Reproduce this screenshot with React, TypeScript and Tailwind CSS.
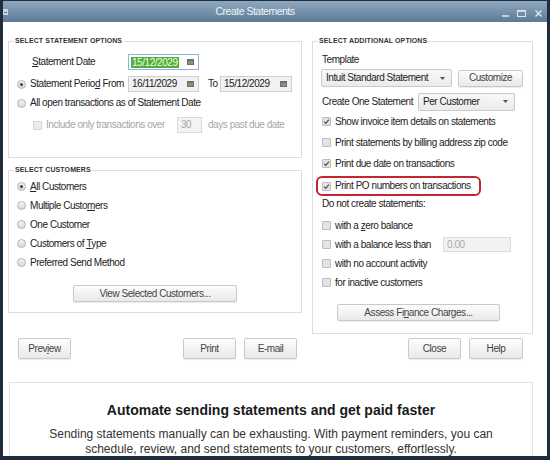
import type { ReactNode } from "react";

// Small building blocks for the statements dialog

function Radio({ checked = false }: { checked?: boolean }) {
    return (
        <span className="w-[9px] h-[9px] rounded-full border border-[#b3b3b3] bg-linear-to-b from-[#f3f3f3] to-[#d9d9d9] flex items-center justify-center shrink-0">
            {checked && <span className="w-[3px] h-[3px] rounded-full bg-[#3f3f3f]" />}
        </span>
    );
}

function Check({ checked = false, disabled = false }: { checked?: boolean; disabled?: boolean }) {
    return (
        <span
            className={`w-[9px] h-[9px] rounded-[1px] border flex items-center justify-center shrink-0 ${
                disabled ? "border-[#d2d2d2] bg-[#ececec]" : "border-[#bdbdbd] bg-[#e4e4e4]"
            }`}
        >
            {checked && (
                <svg width="7" height="7" viewBox="0 0 7 7">
                    <path d="M1.2 3.8 L2.8 5.3 L5.9 1.6" stroke="#505050" strokeWidth="1.2" fill="none" />
                </svg>
            )}
        </span>
    );
}

function CalendarIcon() {
    return (
        <svg width="7" height="6" viewBox="0 0 7 6" className="shrink-0">
            <rect width="7" height="6" fill="#6f6f6f" />
            <rect x="1" y="2" width="5" height="3" fill="#8c8c8c" />
        </svg>
    );
}

function DateInput({ value, width, focused = false }: { value: string; width: string; focused?: boolean }) {
    return (
        <div
            className={`${width} h-[16px] border flex items-center justify-between pl-[2px] pr-[4px] shrink-0 ${
                focused ? "border-[#8db3de] bg-white" : "border-[#cfcfcf] bg-[#f1f1f1]"
            }`}
        >
            {focused ? (
                <span className="bg-[#54ad3c] text-[#eaffdc] leading-[11px] px-[1px]">{value}</span>
            ) : (
                <span className="pl-[1px]">{value}</span>
            )}
            <CalendarIcon />
        </div>
    );
}

function Select({ value, width }: { value: string; width: string }) {
    return (
        <div
            className={`${width} h-[18px] border border-[#cacaca] rounded-[2px] bg-linear-to-b from-[#f8f8f8] to-[#ebebeb] flex items-center justify-between pl-[4px] pr-[6px] shrink-0`}
        >
            <span>{value}</span>
            <svg width="5" height="3" viewBox="0 0 5 3">
                <path d="M0 0 H5 L2.5 3 Z" fill="#555" />
            </svg>
        </div>
    );
}

function Button({ children, className = "" }: { children: ReactNode; className?: string }) {
    return (
        <div
            className={`h-[17px] border border-[#c9c9c9] rounded-[2px] bg-linear-to-b from-[#fdfdfd] to-[#e9e9e9] shadow-[0_1px_1px_rgba(0,0,0,0.08)] flex items-center justify-center text-[#444] shrink-0 ${className}`}
        >
            {children}
        </div>
    );
}

function Group({ title, className, children }: { title: string; className: string; children: ReactNode }) {
    return (
        <fieldset className={`border border-[#dedede] ${className}`}>
            <legend className="ml-[5px] px-[1px] text-[7px] leading-[8px] font-bold tracking-[0.1px] text-[#333]">
                {title}
            </legend>
            {children}
        </fieldset>
    );
}

function TitleBar() {
    return (
        <div className="h-[21px] flex items-center bg-linear-to-b from-[#8fa8bf] to-[#5d7a96] shrink-0">
            <div className="w-[10px] h-full flex items-center">
                <svg width="5" height="6" viewBox="0 0 5 6">
                    <rect width="5" height="6" fill="#c9d4df" />
                    <rect x="1" y="3" width="3" height="1" fill="#5d6f82" />
                </svg>
            </div>
            <div className="flex-1 text-center text-[10.5px] tracking-[-0.5px] text-[#eef3f8]">Create Statements</div>
            <svg width="50" height="21" viewBox="0 0 50 21" className="shrink-0">
                {/* minimise, maximise, close */}
                <path d="M5 15 H12" stroke="#dbe3ec" strokeWidth="1.6" />
                <rect x="20.5" y="9.5" width="8" height="6" stroke="#dbe3ec" strokeWidth="1.1" fill="none" />
                <path d="M20.5 10 H28.5" stroke="#dbe3ec" strokeWidth="1.6" />
                <path d="M38.5 9.5 L44.5 15.5 M44.5 9.5 L38.5 15.5" stroke="#dbe3ec" strokeWidth="1.5" />
            </svg>
        </div>
    );
}

export default function App() {
    return (
        <div className="w-[550px] h-[460px] bg-[#1e2c3b] px-[3px] pt-[1px] pb-[4px] flex flex-col overflow-hidden font-['Liberation_Sans',Arial,sans-serif] text-[10px] leading-none tracking-[-0.45px] text-[#232323]">
            <TitleBar />

            <div className="flex-1 bg-white pl-[5px] pr-[14px] overflow-hidden">
                <div className="flex gap-[10px] pt-[15px]">
                    {/* Left column */}
                    <div className="w-[294px] flex flex-col gap-[8px]">
                        <Group title="SELECT STATEMENT OPTIONS" className="h-[121px]">
                            <div className="mt-[9px] h-[16px] flex items-center">
                                <span className="ml-[23px] w-[96px]">
                                    <u>S</u>tatement Date
                                </span>
                                <DateInput value="15/12/2029" width="w-[71px]" focused />
                            </div>
                            <div className="mt-[6px] h-[16px] flex items-center">
                                <span className="ml-[8px]">
                                    <Radio checked />
                                </span>
                                <span className="ml-[4px] w-[98px]">
                                    Statement Perio<u>d</u> From
                                </span>
                                <DateInput value="16/11/2029" width="w-[71px]" />
                                <span className="ml-[9px] w-[12px]">To</span>
                                <DateInput value="15/12/2029" width="w-[72px]" />
                            </div>
                            <div className="mt-[3px] h-[16px] flex items-center">
                                <span className="ml-[8px]">
                                    <Radio />
                                </span>
                                <span className="ml-[4px]">All open transactions as of Statement Date</span>
                            </div>
                            <div className="mt-[6px] h-[16px] flex items-center text-[#a6a6a6]">
                                <span className="ml-[24px]">
                                    <Check disabled />
                                </span>
                                <span className="ml-[4px] w-[131px]">Include only transactions over</span>
                                <div className="w-[25px] h-[16px] border border-[#dadada] bg-[#f3f3f3] flex items-center pl-[3px]">
                                    30
                                </div>
                                <span className="ml-[6px]">days past due date</span>
                            </div>
                        </Group>

                        <Group title="SELECT CUSTOMERS" className="h-[147px]">
                            <div className="mt-[3px]">
                                {[
                                    [<><u>A</u>ll Customers</>, true],
                                    [<>Multiple Custo<u>m</u>ers</>, false],
                                    [<>One Customer</>, false],
                                    [<>Customers of <u>T</u>ype</>, false],
                                    [<>Preferred Send Method</>, false],
                                ].map(([label, checked], i) => (
                                    <div key={i} className="h-[19px] flex items-center pl-[8px]">
                                        <Radio checked={checked as boolean} />
                                        <span className="ml-[4px]">{label as ReactNode}</span>
                                    </div>
                                ))}
                            </div>
                            <Button className="mt-[13px] mx-auto w-[164px]">View Selected Customers...</Button>
                        </Group>
                    </div>

                    {/* Right column */}
                    <Group title="SELECT ADDITIONAL OPTIONS" className="w-[221px] h-[297px]">
                        <div className="mt-[8px] h-[14px] pl-[9px] flex items-center">Template</div>
                        <div className="mt-[2px] h-[18px] pl-[8px] flex items-center">
                            <Select value="Intuit Standard Statement" width="w-[131px]" />
                            <Button className="ml-[6px] w-[65px]">Customize</Button>
                        </div>
                        <div className="mt-[6px] h-[17px] pl-[9px] flex items-center">
                            <span className="w-[96px]">Create One Statement</span>
                            <Select value="Per Customer" width="w-[97px]" />
                        </div>

                        <div className="mt-[1px]">
                            {[
                                ["Show invoice item details on statements", true],
                                ["Print statements by billing address zip code", false],
                                ["Print due date on transactions", true],
                            ].map(([label, checked]) => (
                                <div key={label as string} className="h-[21px] pl-[9px] flex items-center">
                                    <Check checked={checked as boolean} />
                                    <span className="ml-[4px]">{label}</span>
                                </div>
                            ))}
                        </div>
                        <div className="mt-[2px] ml-[3px] w-[165px] h-[20px] border-2 border-[#c3262e] rounded-[6px] pl-[4px] flex items-center">
                            <Check checked />
                            <span className="ml-[4px]">Print PO numbers on transactions</span>
                        </div>

                        <div className="mt-[1px] h-[14px] pl-[9px] flex items-center">Do not create statements:</div>
                        <div className="mt-[5px]">
                            <div className="h-[19px] pl-[9px] flex items-center">
                                <Check />
                                <span className="ml-[4px]">
                                    with a <u>z</u>ero balance
                                </span>
                            </div>
                            <div className="h-[19px] pl-[9px] flex items-center">
                                <Check />
                                <span className="ml-[4px] w-[108px]">with a balance less than</span>
                                <div className="w-[68px] h-[15px] border border-[#dcdcdc] bg-[#f2f2f2] text-[#aaa] flex items-center pl-[3px]">
                                    0.00
                                </div>
                            </div>
                            <div className="h-[19px] pl-[9px] flex items-center">
                                <Check />
                                <span className="ml-[4px]">with no account activity</span>
                            </div>
                            <div className="h-[19px] pl-[9px] flex items-center">
                                <Check />
                                <span className="ml-[4px]">for inactive customers</span>
                            </div>
                        </div>
                        <Button className="mt-[12px] ml-[24px] w-[163px]">
                            Assess Fi<u>n</u>ance Charges...
                        </Button>
                    </Group>
                </div>

                {/* Dialog actions */}
                <div className="mt-[4px] h-[21px] flex items-center">
                    <Button className="ml-[10px] w-[53px] h-[21px]">
                        Prev<u>i</u>ew
                    </Button>
                    <Button className="ml-[112px] w-[53px] h-[21px]">Print</Button>
                    <Button className="ml-[8px] w-[53px] h-[21px]">E-mail</Button>
                    <Button className="ml-[111px] w-[53px] h-[21px]">Close</Button>
                    <Button className="ml-[8px] w-[54px] h-[21px]">Help</Button>
                </div>

                {/* Payment reminders promo */}
                <div className="mt-[23px] ml-[1px] w-[524px] h-[100px] border border-b-0 border-[#e3e3e3] text-center tracking-normal">
                    <div className="mt-[18px] text-[14px] leading-[18px] font-bold text-[#1a1a1a]">
                        Automate sending statements and get paid faster
                    </div>
                    <div className="mt-[8px] text-[12px] leading-[15px] text-[#333]">
                        Sending statements manually can be exhausting. With payment reminders, you can
                        <br />
                        schedule, review, and send statements to your customers, effortlessly.
                    </div>
                </div>
            </div>
        </div>
    );
}
